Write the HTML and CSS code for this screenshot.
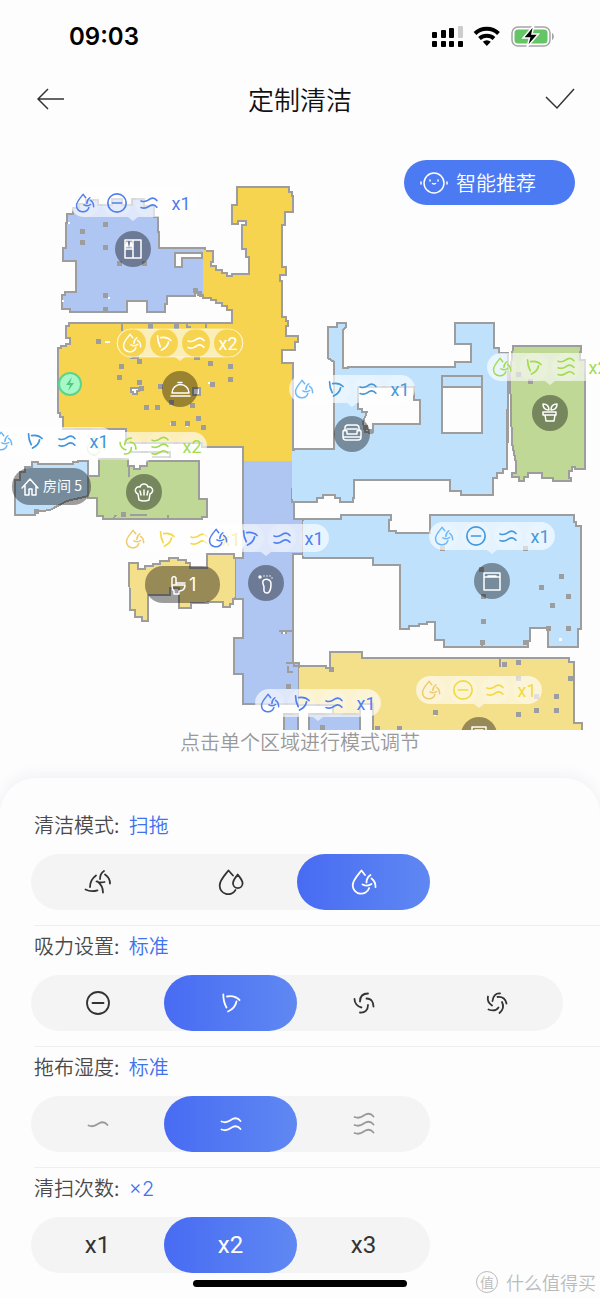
FILE: index.html
```html
<!DOCTYPE html>
<html lang="zh-CN">

<head>
  <meta charset="UTF-8">
  <meta name="viewport" content="width=device-width, initial-scale=1.0">
  <title>定制清洁</title>
  <link rel="stylesheet" href="styles.css">
</head>

<body>
  <!-- icons, all in a 24 x 24 box -->
  <svg class="sprite" aria-hidden="true">
    <symbol id="sweep" viewBox="0 0 24 24">
      <path d="M-.5 19.500c4 2 8 2 12 .8M4 17c0-4 2-8.500 6-11.500M18 1c-3 2-4 5-4 8M19 4.500c3 2 5 5 5 9M10.500 11.500c4 1.200 6 1.200 8 .5M11.500 11.500c4 3 5.500 6 5.500 11" />
    </symbol>
    <symbol id="drops" viewBox="0 0 24 24">
      <path d="M14 5.500L9.500 .5C6 5 .7 10 .7 15.500a8.500 8.500 0 0 0 15.800 4.500" />
      <path d="M18.700 4.500c-2 3-4.700 5.500-4.700 8.800a4.800 4.800 0 0 0 9.600 0c0-3.300-2.700-5.800-4.900-8.800z" />
    </symbol>
    <symbol id="drop" viewBox="0 0 24 24">
      <path d="M13 5L9.500 .5C6 5 .7 10 .7 15.500a8.500 8.500 0 0 0 16.500 2.500" />
      <path d="M18.500 5c-3 2-4 4-4 7.500M19.500 8.500c3 2 4 5 4 8.500M10.500 14.500c4 2 7 1 9-.5" />
    </symbol>
    <symbol id="minus" viewBox="0 0 24 24">
      <circle cx="12" cy="12" r="11" />
      <path d="M6.500 12h11" />
    </symbol>
    <symbol id="fan3" viewBox="0 0 24 24">
      <path d="M4.300 3.500c0 5 1 9 3.200 13M8 5.500c5-1 9 0 12.500 3.500M17.500 10.500c-1 5-4 8-8.500 10" />
    </symbol>
    <symbol id="fan4" viewBox="0 0 24 24">
      <path d="M2.500 8c0 4 3 8 7 8.500M8 10.500c0-5 3-8 8-8M14.500 7.500c5 0 7 4 7 8M16 14c0 5-3 8-8 7.500" />
    </symbol>
    <symbol id="fan5" viewBox="0 0 24 24">
      <path d="M3 5.500c-1 4 1 7 4 9M7.500 10C8 5 11 2 15 2.500M12.500 6c5-.5 8 2 9 6.500M17 11c2 4 1 8-2.500 11M3.500 18.500c4 1.500 8 1 10-2" />
    </symbol>
    <symbol id="wave1" viewBox="0 0 24 24">
      <path d="M2.500 13.500c6 2.500 8-1 11-2.500s6-.5 8 2" />
    </symbol>
    <symbol id="wave2" viewBox="0 0 24 24">
      <path d="M2.500 9.500c6 2.500 8-1 11-2.500s6-.5 8 2M2.500 17.500c6 2.500 8-1 11-2.500s6-.5 8 2" />
    </symbol>
    <symbol id="wave3" viewBox="0 0 24 24">
      <path d="M2.500 5c6 2.500 8-1 11-2.500s6-.5 8 2M2.500 13c6 2.500 8-1 11-2.500s6-.5 8 2M2.500 21c6 2.500 8-1 11-2.500s6-.5 8 2" />
    </symbol>
    <symbol id="bubble" viewBox="-63 -14 126 33">
      <path d="M-49-14h98a14 14 0 0 1 0 28H5l-5 4-5-4h-44a14 14 0 0 1 0-28z" fill="#fff" fill-opacity=".6" stroke="none" />
      <g fill="#fff" fill-opacity=".16" stroke="none">
        <circle cx="-48" r="14" />
        <circle cx="-16" r="14" />
        <circle cx="16" r="14" />
        <circle cx="48" r="14" />
      </g>
    </symbol>
  </svg>

  <div class="status">
    <time>09:03</time>
    <svg width="122" height="22" viewBox="432 24 122 22" aria-hidden="true">
      <g fill="#000">
        <rect x="432" y="40" width="5" height="6" rx="1" />
        <rect x="441" y="40" width="5" height="6" rx="1" />
        <rect x="449" y="40" width="5" height="6" rx="1" />
        <rect x="458" y="40" width="5" height="6" rx="1" />
        <rect x="432" y="31" width="5" height="6" rx="1" />
        <rect x="441" y="29" width="5" height="8" rx="1" />
        <rect x="449" y="27" width="5" height="10" rx="1" />
        <rect x="458" y="25" width="5" height="12" rx="1" fill="#ccc" />
      </g>
      <g fill="none" stroke="#000" stroke-width="4">
        <path d="M475 32.500a17 17 0 0 1 23.500 0" />
        <path d="M479.500 37.500a11 11 0 0 1 14.500 0" />
      </g>
      <path d="M486.800 45l-4-4.200a6 6 0 0 1 8 0z" />
      <rect x="512" y="26" width="38" height="19" rx="6" fill="none" stroke="#a5a5a5" stroke-width="1.500" />
      <rect x="514.500" y="28.500" width="33" height="14" rx="3.500" fill="#65c466" />
      <path d="M552 32c2.500 1 2.500 6 0 7z" fill="#a5a5a5" />
      <path d="M534 24l-11 13h6.500l-2.500 9 11.500-13h-6.500z" stroke="#fff" stroke-width="1.500" />
    </svg>
  </div>

  <header class="header">
    <button type="button" aria-label="返回">
      <svg width="28" height="22" viewBox="0 0 28 22"><path d="M11 1L1 11l10 10M1 11h26" /></svg>
    </button>
    <h1>定制清洁</h1>
    <button type="button" aria-label="完成">
      <svg width="30" height="22" viewBox="0 0 30 22"><path d="M1 9l11 11L29 1" /></svg>
    </button>
  </header>

  <main class="map">
    <svg class="plan" viewBox="0 128 600 602" role="img" aria-label="房间地图">
      <!-- rooms -->
      <g class="walls">
        <path class="indigo" d="M73 212v-4h6v-4h7v-4h12v5h14v-6h10v6h10v-6h12v7h10v11h4v15h1v16h46v48h-5v-3h-5v3h-28v8h-2v8h-18v-11h-20v11H70v-3h-8v-14h3v-3h11v-31H63v-13h3v-25h1v-9h6z" />
        <path class="indigo" d="M243 461h51v58h9v35h-10v109h6v41h-56v-30h-9v-36h9v-39h-8v-41h8z" />
        <path class="gold" d="M237 187h52v5h3v4h1v16h-8v13h-3v42h4v8h-6v6h2v36h4v4h2v5h-2v10h12v6h-3v8h-13v13h11v98h-50v-14h-41v-4h-76v-14H63v-12h-3v-4h-2v-65h3v-2h5v-2h4v-6h-4v-12h3v-3h163v-13h-5v-4h-5v-3h-6v-3h-5v-2h-8v-47h10v11h-2v4h5v4h6v3h5v3h5v-2h17v-17h-3v-8h-4v-24h4v-4h-8v3h-6v-19h5z" />
        <path class="sky" d="M294 449h40v-87l-6-4v-31h9v-4h9v4l-3 3v38h5v-1h107v-5h16v-18h-16v-21h39v25h5v5h9v57h-1v59h-4v4h-6v5h-4v17h-32v-4h-11v-11h-96v18h-1v4h-13v-4h-5v-3h-12v3h-6v4h-25z" />
        <path class="green" d="M513 346h68v6h-1v8h5v109h-10v-2h-3v4h-3v7h2v3h-18v-3h-11v-5h-14v4h-4v4h-5v-4h-7v-4h4v-10l-4-20-2-66z" />
        <path class="sky" d="M15 515v-35h5v-8h5v-5h7v-5h6v2h35v-2h5v-1h10v35l-21 5-17 9-15 2v3z" />
        <path class="green" d="M88 476h11v-17h29v7h6v3h6v-3h7v-5h52v38h8v18h-5v2h-99v-3h-6v-18h-9z" />
        <path class="sky" d="M303 519h38v-4h50v5h-2v11h7v2h34v-18h144v7h2v4h5v103h-3v18h-30v-19h-18v13h-2v6h-84v-7h-9v-18h-8v2h-8v2h-10v3h-9v-64h-27v-7h-70z" />
        <path class="sand" d="M129 563h9v6h7v-3h8v-2h7v-3h9v-3h9v2h8v3h4v5h17v-14h27v4h1v41h-2v5h-3v3h-7v-5h-15v1h-17v5h-12v-20h-9v7h-22v26h-6v-4h-7v-7h-5z" />
        <path class="sand" d="M299 666h27v2h4v-16h32v6h207v4h5v61h8v12H373v-31h-13v10h-27v-9h-34z" />
        <path class="indigo" d="M284 735v-21h14v21zM309 735v-21h51v21z" />
      </g>
      <!-- openings between rooms -->
      <path fill="#afc6f3" d="M197 250h6v44h-6zM236 560h7v38h-7zM244 457h48v10h-48zM292 521h10v32h-10zM292 668h6v34h-6z" />
      <path fill="#f7d44f" d="M203 250h3v44h-3zM244 450h48v11h-48z" />
      <path fill="#bfe1fc" d="M292 451h6v48h-6zM303 521h4v35h-4z" />
      <path fill="#f4df8b" d="M232 559h3v38h-3zM299 668h4v36h-4z" />
      <!-- furniture and gaps -->
      <g class="walls" fill="#fdfdfe">
        <path d="M358 387h56v13h6v24h-47v8h-8l-2-10 4-10h-5v-3h-4z" />
        <path fill="#bfe1fc" d="M442 376h40v57h-40z" />
        <path d="M442 387h40v46h-40z" />
        <path d="M175 267v-14h27v5h-20v9z" />
        <path fill="none" d="M187 323v4h4M122 323v8M206 323v5M279 631h14M281 633h6M286 663h8v3h9M288 666v6h5M129 466v11M130 515h17M113 519l3-4M168 519v-4M130 452h40v5h-18M508 409v34M500 657v10M482 642v5" />
        <path d="M131 388h8v3h-2v3h-4v-2h-2zM193 388h7v7h-7zM133 358h5v-3zM195 357h4v2h-4z" />
      </g>
      <path fill="#fdfdfe" d="M68 222h2v2h-2zM105 341h5v2h-5zM208 382h2v2h-2zM170 423h2v2h-2zM186 425h2v2h-2zM108 297h2v2h-2zM62 300h2v2h-2zM559 638h3v3h-3zM434 714h2v2h-2zM283 632h2v2h-2z" />
      <path class="dots" d="M105 224h0M82 231h0M82 242h0M105 247h0M119 263h0M144 263h0M105 295h0M105 309h0M98 341h0M121 366h0M119 377h0M139 361h0M139 382h0M160 386h0M146 407h0M157 407h0M171 402h0M173 423h0M187 423h0M198 418h0M203 427h0M192 405h0M210 363h0M230 366h0M230 379h0M212 384h0M141 388h0M150 326h0M176 326h0M195 290h0M199 293h0M442 548h0M525 548h0M481 569h0M483 596h0M561 576h0M541 587h0M568 596h0M552 605h0M483 621h0M482 642h0M568 628h0M525 642h0M548 628h0M435 712h0M518 662h0M504 664h0M518 678h0M536 696h0M556 696h0M536 710h0M556 710h0M518 714h0M570 678h0M399 728h0M377 728h0M123 514h0M36 511h0M331 669h0M288 686h0M322 727h0M365 427h0M370 431h0M530 381h0M518 374h0" />

      <!-- dock -->
      <circle cx="70" cy="384" r="11" fill="#a6f8c7" stroke="#5dd48b" stroke-width="2" />
      <path d="M72 377l-6 8h4l-2 6 6-8h-4z" fill="#4ec982" />

      <!-- room markers -->
      <g class="markers">
        <circle cx="133" cy="249" r="18" />
        <circle cx="180" cy="389" r="18" />
        <circle cx="352" cy="434" r="18" />
        <circle cx="550" cy="413" r="18" />
        <circle cx="144" cy="492" r="18" />
        <circle cx="266" cy="583" r="18" />
        <circle cx="492" cy="581" r="18" />
        <circle cx="479" cy="735" r="18" />
        <rect x="12" y="468" width="79" height="37" rx="18" />
        <rect x="145" y="566" width="75" height="37" rx="18" />
      </g>
      <g class="marker-icons">
        <path d="M125 240h16v18h-16zM133 240v18M125 249h8M126 247l1-5 1 5M130 247l1-5 1 5" />
        <path d="M172 393a8.500 8.500 0 0 1 17 0zM171 396h19M178 382.500h4" />
        <path d="M345 431v-3q0-3 3-3h8q3 0 3 3v3M347 429h10M343 432q0-2 2-2t2 2v2h10v-2q0-2 2-2t2 2v5q0 3-3 3h-12q-3 0-3-3zM344 437h16" />
        <path d="M543 412h13v3h-13zM545 415l1 6h8l1-6M549 410c0-4-2-6-6-6 0 4 2 6 6 6M551 410c0-4 2-6 6-6 0 4-2 6-6 6" />
        <path d="M139 500l-1-6c-5-3-2-8 2-7 1-4 7-4 8 0 4-1 7 4 2 7l-1 6q-5 2-10 0M140 491l1 4M144 490v5M148 491l-1 4" />
        <path d="M263 581c2-3 8-2 8 3 0 6-2 9-4 9-4 0-3-4-3-6s-2-3-1-6M264 576h0M267 576h0M270 576h0M272 578h0" />
        <circle cx="260" cy="577" r="1" fill="#fff" />
        <path d="M484 573h16v17h-16zM484 577h16M488 576h8" />
        <path d="M472 727h14v10h-14zM475 730h8" />
        <path d="M22 488l8-9 8 9M25 486v9h4v-6h3v6h4v-9" />
        <path d="M172 585v-7q2-3 4 0v7M172 585h13c0 5-3 6-6 6v3h-5v-3c-2-1-2-3-2-6M177 583h8" />
      </g>
      <text class="room-name" x="43" y="491">房间 5</text>
      <text class="room-count" x="189" y="591">1</text>

      <!-- settings of each room -->
      <g class="setting" color="#4f7ff0" transform="translate(133 203)">
        <use href="#bubble" x="-63" y="-14" width="126" height="33" />
        <use href="#drop" x="-57" y="-9" width="18" height="18" />
        <use href="#minus" x="-26" y="-10" width="20" height="20" />
        <use href="#wave2" x="6" y="-10" width="20" height="20" />
        <text x="48" y="7">x1</text>
      </g>
      <g class="setting" color="#fff" transform="translate(180 343)">
        <use href="#bubble" x="-63" y="-14" width="126" height="33" />
        <g fill="#f7d44f" stroke="none">
          <circle cx="-48" r="14" />
          <circle cx="-16" r="14" />
          <circle cx="16" r="14" />
          <circle cx="48" r="14" />
        </g>
        <rect class="ring" x="-63" y="-14" width="126" height="28" rx="14" />
        <use href="#drop" x="-57" y="-9" width="18" height="18" />
        <use href="#fan3" x="-26" y="-10" width="20" height="20" />
        <use href="#wave2" x="6" y="-10" width="20" height="20" />
        <text x="48" y="7">x2</text>
      </g>
      <g class="setting" color="#4498dc" transform="translate(352 389)">
        <use href="#bubble" x="-63" y="-14" width="126" height="33" />
        <use href="#drop" x="-57" y="-9" width="18" height="18" color="#6cb8f8" />
        <use href="#fan3" x="-26" y="-10" width="20" height="20" />
        <use href="#wave2" x="6" y="-10" width="20" height="20" />
        <text x="48" y="7">x1</text>
      </g>
      <g class="setting" color="#a2dc4c" transform="translate(550 367)">
        <use href="#bubble" x="-63" y="-14" width="126" height="33" />
        <use href="#drop" x="-57" y="-9" width="18" height="18" />
        <use href="#fan3" x="-26" y="-10" width="20" height="20" />
        <use href="#wave3" x="6" y="-10" width="20" height="20" />
        <text x="48" y="7">x2</text>
      </g>
      <g class="setting" color="#a2dc4c" transform="translate(144 446)">
        <use href="#bubble" x="-63" y="-14" width="126" height="33" />
        <use href="#drop" x="-57" y="-9" width="18" height="18" opacity=".4" />
        <use href="#fan4" x="-26" y="-10" width="20" height="20" />
        <use href="#wave3" x="6" y="-10" width="20" height="20" />
        <text x="48" y="7">x2</text>
      </g>
      <g class="setting" color="#3f94dc" transform="translate(51 441)">
        <use href="#bubble" x="-63" y="-14" width="126" height="33" />
        <use href="#drop" x="-57" y="-9" width="18" height="18" color="#6cb8f8" />
        <use href="#fan3" x="-26" y="-10" width="20" height="20" />
        <use href="#wave2" x="6" y="-10" width="20" height="20" />
        <text x="48" y="7">x1</text>
      </g>
      <g class="setting" color="#f3da45" transform="translate(183 539)">
        <use href="#bubble" x="-63" y="-14" width="126" height="33" />
        <use href="#drop" x="-57" y="-9" width="18" height="18" color="#efcb6c" />
        <use href="#fan3" x="-26" y="-10" width="20" height="20" />
        <use href="#wave2" x="6" y="-10" width="20" height="20" />
        <text x="48" y="7">x1</text>
      </g>
      <g class="setting" color="#4f7ff0" transform="translate(266 538)">
        <use href="#bubble" x="-63" y="-14" width="126" height="33" />
        <use href="#drop" x="-57" y="-9" width="18" height="18" />
        <use href="#fan3" x="-26" y="-10" width="20" height="20" />
        <use href="#wave2" x="6" y="-10" width="20" height="20" />
        <text x="48" y="7">x1</text>
      </g>
      <g class="setting" color="#4498dc" transform="translate(492 536)">
        <use href="#bubble" x="-63" y="-14" width="126" height="33" />
        <use href="#drop" x="-57" y="-9" width="18" height="18" color="#6cb8f8" />
        <use href="#minus" x="-26" y="-10" width="20" height="20" />
        <use href="#wave2" x="6" y="-10" width="20" height="20" />
        <text x="48" y="7">x1</text>
      </g>
      <g class="setting" color="#f3da3c" transform="translate(479 690)">
        <use href="#bubble" x="-63" y="-14" width="126" height="33" />
        <use href="#drop" x="-57" y="-9" width="18" height="18" color="#efcb6c" />
        <use href="#minus" x="-26" y="-10" width="20" height="20" />
        <use href="#wave2" x="6" y="-10" width="20" height="20" />
        <text x="48" y="7">x1</text>
      </g>
      <g class="setting" color="#4f7ff0" transform="translate(318 703)">
        <use href="#bubble" x="-63" y="-14" width="126" height="33" />
        <use href="#drop" x="-57" y="-9" width="18" height="18" />
        <use href="#fan3" x="-26" y="-10" width="20" height="20" />
        <use href="#wave2" x="6" y="-10" width="20" height="20" />
        <text x="48" y="7">x1</text>
      </g>
    </svg>

    <button type="button" class="recommend">
      <svg width="28" height="24" viewBox="0 0 28 24" aria-hidden="true">
        <circle cx="14" cy="12" r="10" />
        <path d="M1 11v2M27 11v2M10 9v1M18 9v1M12.500 12.500q1.500 1 3 0" />
      </svg>
      智能推荐
    </button>
    <p class="hint">点击单个区域进行模式调节</p>
  </main>

  <form class="sheet">
    <fieldset>
      <legend>清洁模式: <b>扫拖</b></legend>
      <div class="options">
        <label><input type="radio" name="mode" aria-label="扫"><svg><use href="#sweep" /></svg></label>
        <label><input type="radio" name="mode" aria-label="拖"><svg><use href="#drops" /></svg></label>
        <label><input type="radio" name="mode" aria-label="扫拖" checked><svg><use href="#drop" /></svg></label>
      </div>
    </fieldset>
    <hr>
    <fieldset>
      <legend>吸力设置: <b>标准</b></legend>
      <div class="options four">
        <label><input type="radio" name="suction" aria-label="关闭"><svg><use href="#minus" /></svg></label>
        <label><input type="radio" name="suction" aria-label="标准" checked><svg><use href="#fan3" /></svg></label>
        <label><input type="radio" name="suction" aria-label="强力"><svg><use href="#fan4" /></svg></label>
        <label><input type="radio" name="suction" aria-label="超强"><svg><use href="#fan5" /></svg></label>
      </div>
    </fieldset>
    <hr>
    <fieldset>
      <legend>拖布湿度: <b>标准</b></legend>
      <div class="options pale">
        <label><input type="radio" name="water" aria-label="微湿"><svg><use href="#wave1" /></svg></label>
        <label><input type="radio" name="water" aria-label="标准" checked><svg><use href="#wave2" /></svg></label>
        <label><input type="radio" name="water" aria-label="湿润"><svg><use href="#wave3" /></svg></label>
      </div>
    </fieldset>
    <hr>
    <fieldset>
      <legend>清扫次数: <b>×2</b></legend>
      <div class="options">
        <label><input type="radio" name="times"><span>x1</span></label>
        <label><input type="radio" name="times" checked><span>x2</span></label>
        <label><input type="radio" name="times"><span>x3</span></label>
      </div>
    </fieldset>
  </form>

  <footer class="footer">
    <div class="home-bar"></div>
    <div class="brand"><span class="seal">值</span>什么值得买</div>
  </footer>
</body>

</html>
```
FILE: styles.css
```css
* {
  box-sizing: border-box;
}

body {
  margin: 0;
  background: #fdfdfe;
  color: #4a4a4a;
  font-family: "Noto Sans CJK SC", sans-serif;
  font-size: 20px;
  font-weight: 350;
}

button {
  padding: 0;
  border: 0;
  background: none;
  font: inherit;
}

svg {
  display: block;
  fill: none;
}

.sprite {
  position: absolute;
  width: 0;
  height: 0;
}

/* top bars */
.status {
  display: flex;
  justify-content: space-between;
  align-items: center;
  height: 72px;
  padding: 0 46px 0 69px;
  color: #000;
  font-family: Inter, sans-serif;
  font-size: 24px;
  font-weight: 600;
}

.status svg {
  fill: #000;
}

.header {
  display: grid;
  grid-template-columns: 1fr auto 1fr;
  align-items: center;
  height: 56px;
  padding: 0 25px 2px 37px;
}

.header button {
  justify-self: start;
}

.header button:last-child {
  justify-self: end;
}

.header h1 {
  margin: 0 12px 0 0;
  color: #111;
  font-size: 26px;
  font-weight: 350;
  line-height: 32px;
}

.header svg {
  stroke: #333;
  stroke-width: 1.5;
}

/* map */
.map {
  position: relative;
}

.plan {
  width: 100%;
}

.walls {
  stroke: #9d9d9d;
  stroke-width: 2;
  shape-rendering: crispEdges;
}

.indigo {
  fill: #afc6f3;
}

.gold {
  fill: #f7d44f;
}

.sky {
  fill: #bfe1fc;
}

.green {
  fill: #bfd896;
}

.sand {
  fill: #f4df8b;
}

.dots {
  stroke: #9d9d9d;
  stroke-width: 5;
  stroke-linecap: square;
  shape-rendering: crispEdges;
}

.markers {
  fill: #000;
  fill-opacity: .38;
}

.marker-icons {
  stroke: #fff;
  stroke-width: 1.5;
  stroke-linecap: round;
  stroke-linejoin: round;
}

.room-name,
.room-count {
  fill: #fff;
  font-size: 14px;
  font-weight: 400;
}

.room-count {
  font-family: Inter, sans-serif;
  font-size: 18px;
}

.setting {
  stroke: currentColor;
  stroke-width: 2;
  stroke-linecap: round;
}

.setting .ring {
  stroke-width: 1;
  stroke-opacity: .5;
}

.setting text {
  fill: currentColor;
  stroke: none;
  font-family: Roboto, sans-serif;
  font-size: 18px;
  font-weight: 400;
  text-anchor: middle;
}

.recommend {
  position: absolute;
  top: 32px;
  right: 25px;
  display: flex;
  align-items: center;
  gap: 8px;
  height: 45px;
  padding: 0 39px 0 16px;
  border-radius: 23px;
  background: #4b7af2;
  color: #fff;
  line-height: 24px;
}

.recommend svg {
  stroke: #fff;
  stroke-width: 1.5;
  stroke-linecap: round;
}

.hint {
  margin: 0;
  color: #999;
  line-height: 24px;
  text-align: center;
}

/* bottom sheet */
.sheet {
  margin-top: 24px;
  padding-top: 27px;
  border-radius: 36px 36px 0 0;
  background: #fdfdfe;
  box-shadow: 0 -4px 14px rgba(60, 70, 110, .06);
}

fieldset {
  min-width: 0;
  margin: 0;
  padding: 0 37px 15px 31px;
  border: 0;
}

fieldset:last-child {
  padding-bottom: 0;
}

/* divider runs to the right edge */
hr {
  height: 1px;
  margin: 0 0 0 34px;
  border: 0;
  background: #efeff1;
}

legend {
  height: 40px;
  margin-bottom: 9px;
  padding: 0 3px;
  line-height: 40px;
}

legend b {
  margin-left: 5px;
  color: #3f72ee;
  font-family: Inter, "Noto Sans CJK SC", sans-serif;
  font-weight: 350;
  line-height: 1;
}

.options {
  display: grid;
  grid-template-columns: repeat(3, 1fr);
  width: 75%;
  height: 56px;
  border-radius: 28px;
  background: #f4f4f4;
}

.options.four {
  grid-template-columns: repeat(4, 1fr);
  width: 100%;
}

.options label {
  display: grid;
  place-items: center;
  color: #333;
}

.options label > * {
  grid-area: 1 / 1;
}

.options input {
  width: 100%;
  height: 100%;
  margin: 0;
  border-radius: 28px;
  appearance: none;
}

.options input:checked {
  background: linear-gradient(90deg, #486bf3, #5f88f2);
}

.options svg {
  width: 24px;
  height: 24px;
  overflow: visible;
  stroke: currentColor;
  stroke-width: 1.8;
  stroke-linecap: round;
  stroke-linejoin: round;
}

.options span {
  font-family: Roboto, sans-serif;
  font-size: 24px;
  font-weight: 400;
}

.options.pale label {
  color: #999;
}

.options input:checked + * {
  color: #fff;
}

symbol {
  overflow: visible;
}

/* covers the lower edge of the sheet's shadow */
.footer {
  position: relative;
  display: grid;
  grid-template-columns: 1fr 214px 1fr;
  align-items: start;
  height: 25px;
  background: #fdfdfe;
}

.home-bar {
  grid-column: 2;
  height: 7px;
  margin-top: 7px;
  border-radius: 4px;
  background: #000;
}

.brand {
  display: flex;
  justify-content: flex-end;
  align-items: center;
  gap: 8px;
  height: 18px;
  padding-right: 4px;
  color: #bbb;
  font-size: 18px;
  line-height: 18px;
}

.seal {
  width: 22px;
  height: 22px;
  border: 1px solid #bbb;
  border-radius: 50%;
  font-size: 14px;
  line-height: 20px;
  text-align: center;
}
```
